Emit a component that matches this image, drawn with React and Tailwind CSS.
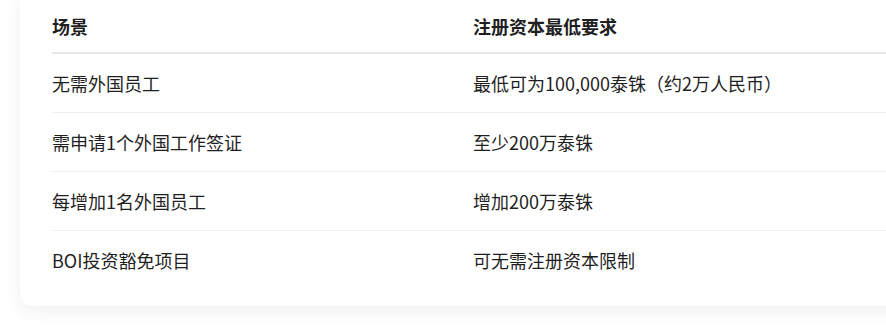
import React from "react";

const rows = [
  ["无需外国员工", "最低可为100,000泰铢（约2万人民币）"],
  ["需申请1个外国工作签证", "至少200万泰铢"],
  ["每增加1名外国员工", "增加200万泰铢"],
  ["BOI投资豁免项目", "可无需注册资本限制"],
];

export default function App() {
  return (
    <div
      className="w-[886px] h-[330px] overflow-hidden bg-white pl-[20px]"
      style={{ fontFamily: '"Noto Sans CJK SC", "Noto Sans", sans-serif' }}
    >
      <div className="w-[940px] bg-white rounded-b-xl shadow-[0_4px_18px_rgba(0,0,0,0.07)] pl-8 pb-[17px] text-[18px] text-[#1f1f1f]">
        <div className="grid grid-cols-[421px_1fr] border-b-2 border-[#e6e6e6] font-bold leading-[26px]">
          <div className="py-[13px]">场景</div>
          <div className="py-[13px]">注册资本最低要求</div>
        </div>
        {rows.map((r, i) => (
          <div
            key={i}
            className={
              "grid grid-cols-[421px_1fr] leading-[26px] " +
              (i < rows.length - 1 ? "border-b border-[#f0f0f0]" : "")
            }
          >
            <div className="py-4">{r[0]}</div>
            <div className="py-4">{r[1]}</div>
          </div>
        ))}
      </div>
    </div>
  );
}
